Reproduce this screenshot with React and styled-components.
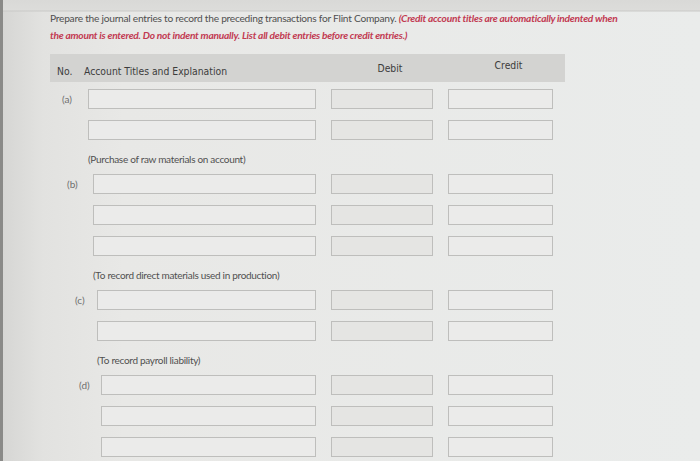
import React from "react";
import styled, { createGlobalStyle } from "styled-components";

const GlobalStyle = createGlobalStyle`
  html, body {
    margin: 0;
    padding: 0;
    background: #e6e6e4;
  }
`;

const Page = styled.div`
  width: 700px;
  height: 461px;
  overflow: hidden;
  box-sizing: border-box;
  padding: 10px 0 0 50px;
  border-left: 3px solid #8a8a88;
  background:
    linear-gradient(180deg, #d9d9d7 0, #dcdcda 10px, #c9c9c7 11px, transparent 12px),
    linear-gradient(90deg, #d6d6d4 0, #e2e2e0 40px, #e8e8e6 120px, #eaeceb 100%);
  font-family: Lato, "Open Sans", sans-serif;
`;

const Instructions = styled.div`
  margin: 0 0 0 -3px;
  width: 575px;
  font-size: 10.2px;
  line-height: 17px;
  letter-spacing: -0.25px;
  color: #505050;
`;

const Warning = styled.span`
  color: #c23a52;
  font-weight: 700;
  font-style: italic;
`;

const HeaderBar = styled.div`
  margin: 10px 0 0 -3px;
  width: 515px;
  height: 28px;
  background: #d3d3d1;
  display: grid;
  grid-template-columns: 27px 255px 102px 15px 105px;
  align-items: center;
  font-family: "DejaVu Sans Condensed", "DejaVu Sans", sans-serif;
  font-size: 10.3px;
  color: #3c3c3c;
  padding-left: 7px;
  box-sizing: border-box;
`;

const HeadCell = styled.div`
  text-align: ${(p) => (p.center ? "center" : "left")};
  grid-column: ${(p) => p.col};
  transform: translateY(${(p) => p.lift || 0}px);
`;

const Groups = styled.div`
  margin: 7px 0 0 -3px;
  display: flex;
  flex-direction: column;
`;

const Group = styled.section`
  display: flex;
  flex-direction: column;
  gap: 11px;
`;

const Row = styled.div`
  display: grid;
  grid-template-columns: ${(p) => p.inset - 15}px ${(p) => 266 - p.inset}px 102px 105px;
  column-gap: 15px;
  align-items: center;
  height: 20px;
`;

const Label = styled.span`
  font-size: 10px;
  color: #6e6e6e;
  padding-left: ${(p) => p.pad}px;
  white-space: nowrap;
`;

const Field = styled.div`
  height: 20px;
  box-sizing: border-box;
  border: 1px solid #bebebc;
  background: ${(p) => (p.hatch ? "#e5e5e3" : "#ebebea")};
`;

const Note = styled.div`
  margin: 12px 0 8px ${(p) => p.inset}px;
  height: 14px;
  line-height: 14px;
  font-size: 10px;
  letter-spacing: -0.3px;
  color: #505050;
`;

const groups = [
  { id: "a", inset: 38, pad: 12, rows: 2, note: "(Purchase of raw materials on account)" },
  { id: "b", inset: 43, pad: 17, rows: 3, note: "(To record direct materials used in production)" },
  { id: "c", inset: 47, pad: 25, rows: 2, note: "(To record payroll liability)" },
  { id: "d", inset: 51, pad: 29, rows: 3, note: null },
];

function EntryGroup({ group }) {
  const rows = Array.from({ length: group.rows });
  return (
    <>
      <Group>
        {rows.map((_, i) => (
          <Row key={i} inset={group.inset}>
            <Label pad={group.pad}>{i === 0 ? `(${group.id})` : ""}</Label>
            <Field />
            <Field hatch />
            <Field />
          </Row>
        ))}
      </Group>
      {group.note && <Note inset={group.inset}>{group.note}</Note>}
    </>
  );
}

export default function App() {
  return (
    <>
      <GlobalStyle />
      <Page>
        <Instructions>
          Prepare the journal entries to record the preceding transactions for Flint Company.{" "}
          <Warning>
            (Credit account titles are automatically indented when the amount is entered. Do not
            indent manually. List all debit entries before credit entries.)
          </Warning>
        </Instructions>
        <HeaderBar>
          <HeadCell col={1} lift={3}>No.</HeadCell>
          <HeadCell col={2} lift={3}>Account Titles and Explanation</HeadCell>
          <HeadCell col={3} center lift={0}>Debit</HeadCell>
          <HeadCell col={5} center lift={-3}>Credit</HeadCell>
        </HeaderBar>
        <Groups>
          {groups.map((g) => (
            <EntryGroup key={g.id} group={g} />
          ))}
        </Groups>
      </Page>
    </>
  );
}
